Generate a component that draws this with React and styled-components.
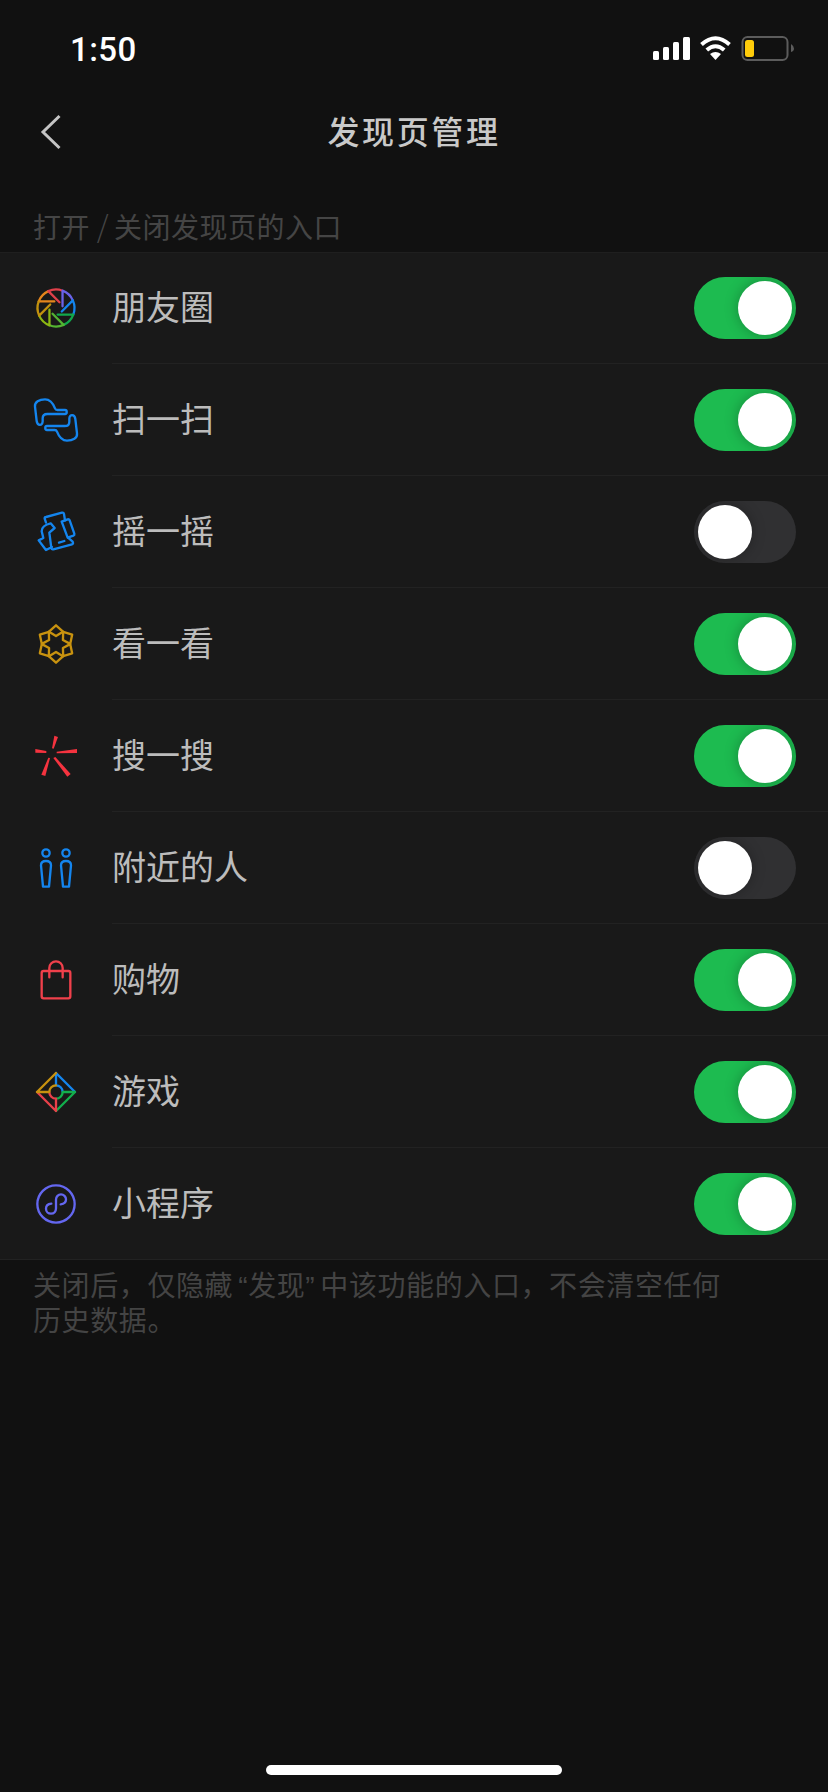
import React from "react";
import styled, { createGlobalStyle } from "styled-components";

const Global = createGlobalStyle`
  html, body { margin: 0; padding: 0; background: #111111; }
  body { font-family: "Noto Sans CJK SC", "Noto Sans", sans-serif; }
`;

const Page = styled.div`
  width: 828px;
  height: 1792px;
  display: flex;
  flex-direction: column;
  background: #111111;
  overflow: hidden;
`;

const StatusBar = styled.div`
  height: 88px;
  box-sizing: border-box;
  padding: 10px 33px 0 70px;
  display: flex;
  align-items: center;
  justify-content: space-between;
`;

const Time = styled.span`
  font-family: Roboto, sans-serif;
  font-weight: 500;
  font-size: 33px;
  letter-spacing: 0.4px;
  color: #ffffff;
`;

const StatusIcons = styled.svg`
  display: block;
  width: 142px;
  height: 26px;
`;

const NavBar = styled.div`
  height: 88px;
  box-sizing: border-box;
  padding-bottom: 4px;
  position: relative;
  display: flex;
  align-items: center;
  justify-content: center;
`;

const BackIcon = styled.svg`
  position: absolute;
  left: 40px;
  top: 26px;
  width: 22px;
  height: 36px;
`;

const Title = styled.h1`
  margin: 0;
  font-size: 32px;
  font-weight: 500;
  letter-spacing: 2.6px;
  color: #c9c9c9;
`;

const SectionLabel = styled.div`
  height: 76px;
  box-sizing: border-box;
  padding: 26px 0 0 33px;
  font-size: 28px;
  line-height: 48px;
  letter-spacing: 0.5px;
  color: #454545;
  font-weight: 400;
  white-space: pre;
`;

const Slash = styled.span`
  font-size: 30px;
  font-weight: 300;
  line-height: 1;
  margin-right: -2px;
`;

const List = styled.div`
  background: #191919;
  box-shadow: inset 0 1px 0 #1f1f1f;
  height: 1008px;
`;

const Row = styled.div`
  height: 112px;
  box-sizing: border-box;
  display: flex;
  align-items: stretch;
  border-bottom: ${(p) => (p.$last ? "1px solid #222222" : "none")};
`;

const IconCell = styled.div`
  width: 112px;
  flex: none;
  display: flex;
  align-items: center;
  justify-content: center;
`;

const RowBody = styled.div`
  flex: 1;
  display: flex;
  align-items: center;
  justify-content: space-between;
  padding-right: 32px;
  box-sizing: border-box;
  border-bottom: ${(p) => (p.$last ? "none" : "1px solid #222222")};
`;

const Label = styled.span`
  font-size: 34px;
  color: #bcbcbc;
  padding-bottom: 4px;
`;

const Track = styled.div`
  width: 102px;
  height: 62px;
  border-radius: 31px;
  background: ${(p) => (p.$on ? "#1dbb50" : "#303032")};
  overflow: hidden;
  display: flex;
  align-items: center;
  justify-content: ${(p) => (p.$on ? "flex-end" : "flex-start")};
  padding: 0 4px;
  box-sizing: border-box;
`;

const Knob = styled.div`
  width: 54px;
  height: 54px;
  border-radius: 50%;
  background: #ffffff;
  box-shadow: 0 0 14px rgba(0, 0, 0, 0.28);
`;

const Footer = styled.div`
  padding: 8px 60px 0 33px;
  font-size: 28px;
  line-height: 33px;
  letter-spacing: 0.6px;
  color: #444444;
  white-space: nowrap;
`;

const Quote = styled.span`
  font-family: "Liberation Sans", sans-serif;
  margin: ${(p) => (p.$open ? "0 0 0 5px" : "0 5px 0 0")};
`;

const HomeBar = styled.div`
  margin: auto auto 17px;
  width: 296px;
  height: 10px;
  border-radius: 5px;
  background: #ffffff;
`;

const IconSvg = styled.svg.attrs({ viewBox: "-72 -72 144 144" })`
  display: block;
  width: 48px;
  height: 48px;
  fill: none;
  stroke-width: 7;
  stroke-linejoin: round;
  stroke-linecap: round;
`;

const BLUE = "#1485ee";

const Aperture = () => {
  const colors = ["#e5861c", "#e0404a", "#6a62e8", "#1485ee", "#12a84c", "#54b432", "#8cb812", "#c2920e"];
  return (
    <IconSvg>
      {colors.map((c, i) => (
        <path
          key={c}
          stroke={c}
          transform={`rotate(${45 * i}) scale(0.98)`}
          d="M-53 -20 L-5 -20 M-53 -20 A56.6 56.6 0 0 1 -23.3 -51.6"
        />
      ))}
    </IconSvg>
  );
};

const SCAN = "M-33 -62 C-18 -62 -8 -48 -3 -35 Q-1 -30 4 -30 L27 -30 C34 -30 34 -18 27 -18 L-26 -18 C-36 -18 -40 -14 -40 -5 L-40 4 C-40 18 -56 18 -58 3 L-63 -40 C-65 -54 -50 -62 -33 -62 Z";

const Scan = () => (
  <IconSvg stroke={BLUE}>
    <path d={SCAN} />
    <path d={SCAN} transform="rotate(180)" />
  </IconSvg>
);

const Shake = () => (
  <IconSvg stroke={BLUE}>
    <path d="M-30 -28 L-34 -40 Q-35 -44 -30 -45 L18 -58 Q23 -59 24 -54 L27 -35" />
    <path d="M17 -31 L35 -38 Q39 -39 41 -35 L55 5 Q56 9 52 11 L35 17 Z" />
    <path d="M36 17 L50 29 Q53 36 48 37 L-8 52 Q-13 53 -14 48 L-20 2 L-4 -12 L-16 -26 Q-43 -20 -43 -2 L-38 18 L-52 25 L-30 54 L-12 45" />
    <path d="M9 32 L25 27" />
  </IconSvg>
);

const Star = () => (
  <IconSvg stroke="#c8920f">
    {[0, 60, 120, 180, 240, 300].map((a) => (
      <path key={a} transform={`rotate(${a})`} d="M0 -56 L21 -37 L0 -24 L-21 -37 Z" />
    ))}
  </IconSvg>
);

const Search = () => (
  <IconSvg>
    <g fill="#f5333f" stroke="none">
      <polygon points="-12,-23 -7,-22 6,-57 -5,-61" />
      <polygon points="2,-13 2,-8 63,-9 63,-21" />
      <polygon points="-8,6 -2,3 44,54 34,62" />
      <polygon points="-23,5 -18,6 -32,60 -44,56" />
      <polygon points="-29,-15 -29,-9 -62,-10 -62,-21" />
    </g>
  </IconSvg>
);

const People = () => (
  <IconSvg stroke={BLUE}>
    {[-30, 30].map((x) => (
      <g key={x} transform={`translate(${x} 0)`}>
        <circle cx="0" cy="-45" r="11" />
        <path d="M-15 -8 Q-15 -21 0 -21 Q15 -21 15 -8 L9 56 L-9 56 Z" />
      </g>
    ))}
  </IconSvg>
);

const Bag = () => (
  <IconSvg stroke="#f0404b">
    <rect x="-43" y="-27" width="86" height="82" rx="6" />
    <path d="M-20 -8 V-36 A20 20 0 0 1 20 -36 V-8" />
  </IconSvg>
);

const Games = () => (
  <IconSvg>
    {[BLUE, "#12ae4c", "#e8404a", "#c8920f"].map((c, i) => (
      <path key={c} stroke={c} transform={`rotate(${90 * i})`} d="M0 -57 L57 0 M0 -57 V-20 A20 20 0 0 1 20 0" />
    ))}
  </IconSvg>
);

const Mini = () => (
  <IconSvg stroke="#6467f0">
    <circle r="56" />
    <path d="M-14 -1 C-24 0 -30 6 -30 14 C-30 23 -23 29 -15 29 C-6 29 0 22 0 13 V-13 C0 -22 7 -29 15 -29 C23 -29 30 -22 30 -14 C30 -6 24 0 14 1" />
  </IconSvg>
);

const rows = [
  { label: "朋友圈", Icon: Aperture, on: true },
  { label: "扫一扫", Icon: Scan, on: true },
  { label: "摇一摇", Icon: Shake, on: false },
  { label: "看一看", Icon: Star, on: true },
  { label: "搜一搜", Icon: Search, on: true },
  { label: "附近的人", Icon: People, on: false },
  { label: "购物", Icon: Bag, on: true },
  { label: "游戏", Icon: Games, on: true },
  { label: "小程序", Icon: Mini, on: true },
];

export default function App() {
  return (
    <Page>
      <Global />
      <StatusBar>
        <Time>1:50</Time>
        <StatusIcons viewBox="653 37 142 26">
          <g fill="#fff">
            <rect x="653" y="52" width="6" height="9" rx="1.5" />
            <rect x="663" y="48" width="6" height="13" rx="1.5" />
            <rect x="673" y="43" width="6" height="18" rx="1.5" />
            <rect x="683" y="38" width="7" height="23" rx="1.5" />
            <path d="M715.5 61 L710 55 Q715.5 51 721 55 Z" />
          </g>
          <g fill="none" stroke="#fff" strokeWidth="4">
            <path d="M701.5 45.5 Q715.5 33 729.5 45.5" />
            <path d="M706.8 51 Q715.5 43.5 724.2 51" />
          </g>
          <rect x="742.5" y="38" width="45" height="23" rx="5" fill="none" stroke="#5c5c5c" strokeWidth="2" />
          <rect x="745" y="41" width="9" height="17" rx="2.5" fill="#ffcc0a" />
          <path d="M791 45 Q794 47 794 49.5 Q794 52 791 53 Z" fill="#5c5c5c" />
        </StatusIcons>
      </StatusBar>
      <NavBar>
        <BackIcon viewBox="0 0 22 36" fill="none" stroke="#c4c4c4" strokeWidth="3">
          <path d="M19.5 2 L3 18 L19.5 34" />
        </BackIcon>
        <Title>发现页管理</Title>
      </NavBar>
      <SectionLabel>
        打开 <Slash>/</Slash> 关闭发现页的入口
      </SectionLabel>
      <List>
        {rows.map(({ label, Icon, on }, i) => (
          <Row key={label} $last={i === rows.length - 1}>
            <IconCell>
              <Icon />
            </IconCell>
            <RowBody $last={i === rows.length - 1}>
              <Label>{label}</Label>
              <Track $on={on}>
                <Knob />
              </Track>
            </RowBody>
          </Row>
        ))}
      </List>
      <Footer>
        关闭后，仅隐藏<Quote $open>“</Quote>发现<Quote>”</Quote>中该功能的入口，不会清空任何
        <br />
        历史数据。
      </Footer>
      <HomeBar />
    </Page>
  );
}
